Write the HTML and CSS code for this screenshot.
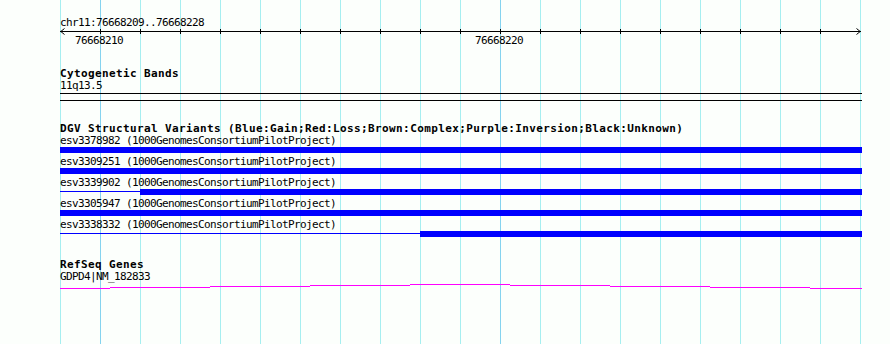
FILE: index.html
```html
<!DOCTYPE html>
<html lang="en">
<head>
    <meta charset="UTF-8">
    <meta name="viewport" content="width=device-width, initial-scale=1.0">
    <title>chr11:76668209..76668228</title>
    <link rel="stylesheet" href="styles.css">
</head>
<body>
    <div class="browser">
        <div class="panel">
            <section class="ruler">
                <div class="ruler-title">chr11:76668209..76668228</div>
                <svg class="ruler-axis" width="802" height="7" viewBox="0 0 802 7">
                    <path class="axis-line" d="M0 3.5H801M40.5 1v5M80.5 1v5M120.5 1v5M160.5 1v5M200.5 1v5M240.5 1v5M280.5 1v5M320.5 1v5M360.5 1v5M400.5 1v5M440.5 1v5M480.5 1v5M520.5 1v5M560.5 1v5M600.5 1v5M640.5 1v5M680.5 1v5M720.5 1v5M760.5 1v5"/>
                    <path class="axis-arrow" d="M4.5 0.5L0.8 3.5L4.5 6.5M796.5 0.5L800.2 3.5L796.5 6.5"/>
                </svg>
                <div class="ruler-labels">
                    <span class="ruler-label" style="left: 39px">76668210</span>
                    <span class="ruler-label" style="left: 439px">76668220</span>
                </div>
            </section>

            <section class="track track-cyto">
                <div class="track-title">Cytogenetic Bands</div>
                <div class="feature-label">11q13.5</div>
                <div class="cyto-band"></div>
            </section>

            <section class="track track-dgv">
                <div class="track-title">DGV Structural Variants (Blue:Gain;Red:Loss;Brown:Complex;Purple:Inversion;Black:Unknown)</div>
                <div class="variant">
                    <div class="feature-label">esv3378982 (1000GenomesConsortiumPilotProject)</div>
                    <div class="variant-bar"><div class="bar-solid"></div></div>
                </div>
                <div class="variant">
                    <div class="feature-label">esv3309251 (1000GenomesConsortiumPilotProject)</div>
                    <div class="variant-bar"><div class="bar-solid"></div></div>
                </div>
                <div class="variant">
                    <div class="feature-label">esv3339902 (1000GenomesConsortiumPilotProject)</div>
                    <div class="variant-bar"><div class="bar-thin" style="width: 80px"></div><div class="bar-solid"></div></div>
                </div>
                <div class="variant">
                    <div class="feature-label">esv3305947 (1000GenomesConsortiumPilotProject)</div>
                    <div class="variant-bar"><div class="bar-solid"></div></div>
                </div>
                <div class="variant">
                    <div class="feature-label">esv3338332 (1000GenomesConsortiumPilotProject)</div>
                    <div class="variant-bar"><div class="bar-thin" style="width: 360px"></div><div class="bar-solid"></div></div>
                </div>
            </section>

            <section class="track track-refseq">
                <div class="track-title">RefSeq Genes</div>
                <div class="feature-label">GDPD4|NM_182833</div>
                <svg class="gene-line" width="802" height="7" viewBox="0 0 802 7">
                    <rect x="0" y="5" width="50" height="1"/>
                    <rect x="50" y="4" width="100" height="1"/>
                    <rect x="150" y="3" width="100" height="1"/>
                    <rect x="250" y="2" width="100" height="1"/>
                    <rect x="350" y="1" width="100" height="1"/>
                    <rect x="450" y="2" width="100" height="1"/>
                    <rect x="550" y="3" width="100" height="1"/>
                    <rect x="650" y="4" width="100" height="1"/>
                    <rect x="750" y="5" width="52" height="1"/>
                </svg>
            </section>
        </div>
    </div>
</body>
</html>
```

FILE: styles.css
```css
body {
    margin: 0;
    padding: 0;
    background-color: #fcfffc;
    color: black;
    font-family: "DejaVu Sans Mono", "Liberation Mono", monospace;
    font-size: 11px;
}
.browser {
    min-height: 100vh;
    background:
        linear-gradient(#85d3ef, #85d3ef) 100px 0 / 1px 100% no-repeat,
        linear-gradient(#85d3ef, #85d3ef) 500px 0 / 1px 100% no-repeat,
        repeating-linear-gradient(to right, #a6eef0 0 1px, transparent 1px 40px) 60px 0 / 801px 100% no-repeat;
}
.panel {
    padding-left: 60px;
    width: 802px;
    padding-top: 17px;
}
.ruler-title {
    line-height: 11px;
    height: 11px;
    letter-spacing: -0.62px;
    white-space: nowrap;
}
.ruler-axis {
    display: block;
}
.axis-line {
    stroke: black;
    stroke-width: 1;
    fill: none;
    shape-rendering: crispEdges;
}
.axis-arrow {
    stroke: black;
    stroke-width: 1;
    fill: none;
}
.ruler-labels {
    position: relative;
    height: 11px;
    line-height: 11px;
}
.ruler-label {
    position: absolute;
    top: 0;
    transform: translateX(-50%);
    letter-spacing: -0.62px;
    white-space: nowrap;
}
.track-title {
    font-weight: bold;
    line-height: 12px;
    letter-spacing: 0.38px;
    white-space: nowrap;
}
.feature-label {
    line-height: 12px;
    letter-spacing: -0.62px;
    white-space: nowrap;
}
.track-cyto {
    margin-top: 22px;
}
.cyto-band {
    box-sizing: border-box;
    margin-top: 1px;
    height: 8px;
    border-top: 1px solid black;
    border-bottom: 1px solid black;
}
.track-dgv {
    margin-top: 21px;
}
.track-dgv .track-title {
    line-height: 13px;
}
.variant {
    padding-bottom: 3px;
}
.variant-bar {
    display: flex;
    height: 6px;
}
.bar-thin {
    height: 1px;
    margin-top: 2px;
    background-color: blue;
}
.bar-solid {
    flex: 1;
    background-color: blue;
}
.track-refseq {
    margin-top: 19px;
}
.gene-line {
    display: block;
    fill: magenta;
    shape-rendering: crispEdges;
}
```
